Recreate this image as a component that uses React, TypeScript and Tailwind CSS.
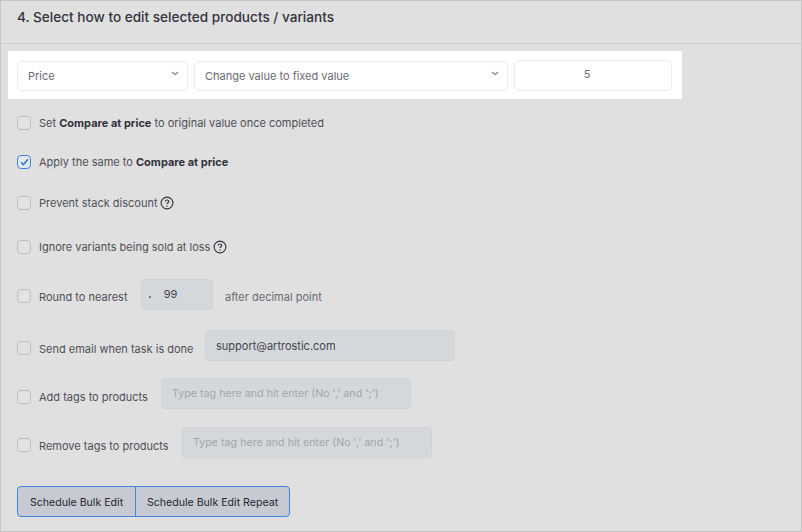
import { ReactNode } from 'react'

const Check = ({ checked }: { checked?: boolean }) =>
  checked ? (
    <span className="flex h-[14px] w-[14px] shrink-0 items-center justify-center rounded-[4px] border border-[#3f87dc] bg-[#e4e8ee]">
      <svg width="9" height="8" viewBox="0 0 9 8" fill="none">
        <path d="M1 4.2 3.4 6.6 8 1.2" stroke="#2f78d2" strokeWidth="1.5" />
      </svg>
    </span>
  ) : (
    <span className="h-[14px] w-[14px] shrink-0 rounded-[4px] border border-[#bdbdc8] bg-[#e2e2e2]" />
  )

const Help = ({ className }: { className: string }) => (
  <svg width="14" height="14" viewBox="0 0 14 14" fill="none" className={`mb-0.5 shrink-0 ${className}`}>
    <circle cx="7" cy="7" r="5.9" stroke="#33333d" strokeWidth="1.1" />
    <path d="M5.2 5.6c0-1 .8-1.6 1.8-1.6s1.8.6 1.8 1.5c0 1.3-1.8 1.3-1.8 2.6" stroke="#33333d" strokeWidth="1.1" />
    <circle cx="7" cy="10" r=".7" fill="#33333d" />
  </svg>
)

const Chevron = () => (
  <svg width="8" height="5" viewBox="0 0 8 5" fill="none" className="mb-1 shrink-0">
    <path d="M1 1l3 2.6L7 1" stroke="#77778c" strokeWidth="1.1" />
  </svg>
)

const Row = ({ className, children }: { className: string; children: ReactNode }) => (
  <div className={`flex items-center text-[11px] text-[#4f4f58] ${className}`}>{children}</div>
)

const Field = ({ className, children }: { className: string; children: ReactNode }) => (
  <div className={`flex items-center rounded-[4px] border border-[#cfd3d7] bg-[#d5d8db] ${className}`}>{children}</div>
)

export default function App() {
  return (
    <div className="h-[532px] w-[802px] overflow-hidden border border-[#c6c6c6] bg-[#e0e0e0] font-['Inter',sans-serif]">
      {/* Header */}
      <div className="flex h-[43px] items-start border-b border-[#cfcfcf] pl-4 pt-[7px] text-[13.6px] font-medium leading-[18px] text-[#33333d]">
        4. Select how to edit selected products / variants
      </div>

      {/* White band */}
      <div className="ml-[7px] mt-[7px] flex h-12 w-[674px] items-center gap-1.5 bg-white pl-[9px] text-[11px] text-[#6a6a76]">
        <div className="mt-px flex h-[30px] w-[171px] items-center justify-between rounded-[5px] border border-[#ebebf3] pl-[10px] pr-2">
          <span className="pt-px">Price</span>
          <Chevron />
        </div>
        <div className="mt-px flex h-[30px] w-[314px] items-center justify-between rounded-[5px] border border-[#ebebf3] pl-[10px] pr-2">
          <span className="pt-px">Change value to fixed value</span>
          <Chevron />
        </div>
        <div className="flex h-[31px] w-[158px] items-center justify-center rounded-[5px] border border-[#ebebf3] pb-0.5 pr-3">
          5
        </div>
      </div>

      {/* Options */}
      <div className="pl-4">
        <Row className="mt-4 h-4 gap-2">
          <Check />
          <span className="pt-px">
            Set <b className="font-bold text-[#33333d]">Compare at price</b> to original value once completed
          </span>
        </Row>
        <Row className="mt-[23px] h-4 gap-2">
          <Check checked />
          <span className="pt-px">
            Apply the same to <b className="font-bold text-[#33333d]">Compare at price</b>
          </span>
        </Row>
        <Row className="mt-[25px] h-4 gap-2">
          <Check />
          <span className="flex items-center pt-px">
            Prevent stack discount
            <Help className="ml-0.5" />
          </span>
        </Row>
        <Row className="mt-7 h-4 gap-2">
          <Check />
          <span className="flex items-center pt-px">
            Ignore variants being sold at loss
            <Help className="ml-[3px]" />
          </span>
        </Row>
        <Row className="mt-6 h-[34px]">
          <Check />
          <span className="ml-2 w-[102px] pt-[3px]">Round to nearest</span>
          <Field className="mb-[3px] h-[31px] w-[72px] text-[#45454e]">
            <span className="ml-[6px] font-bold">.</span>
            <span className="ml-3">99</span>
          </Field>
          <span className="ml-3 pt-[3px] text-[#6a6a76]">after decimal point</span>
        </Row>
        <Row className="mt-[17px] h-[35px]">
          <Check />
          <span className="ml-2 w-[166px] pt-[3px]">Send email when task is done</span>
          <Field className="mb-1 h-[31px] w-[250px] pl-[10px] pt-px text-[#45454e]">support@artrostic.com</Field>
        </Row>
        <Row className="mt-[13px] h-[37px]">
          <Check />
          <span className="ml-2 w-[122px] pt-px">Add tags to products</span>
          <Field className="mb-[6px] h-[31px] w-[250px] pl-[10px] pt-px text-[10.7px] text-[#a3a5ab]">
            Type tag here and hit enter (No ',' and ';')
          </Field>
        </Row>
        <Row className="mt-3 h-9">
          <Check />
          <span className="ml-2 w-[143px] pt-[3px]">Remove tags to products</span>
          <Field className="mb-[5px] h-[31px] w-[250px] pl-[10px] pt-px text-[10.7px] text-[#a3a5ab]">
            Type tag here and hit enter (No ',' and ';')
          </Field>
        </Row>

        {/* Buttons */}
        <div className="mt-[23px] flex h-[31px] w-[273px] overflow-hidden rounded-[4px] border border-[#3f87dc] bg-[#c8cad3] text-[10.6px] text-[#26262e]">
          <div className="flex w-[118px] items-center justify-center border-r border-[#3f87dc] pt-[3px]">
            Schedule Bulk Edit
          </div>
          <div className="flex flex-1 items-center justify-center pt-[3px]">Schedule Bulk Edit Repeat</div>
        </div>
      </div>
    </div>
  )
}
